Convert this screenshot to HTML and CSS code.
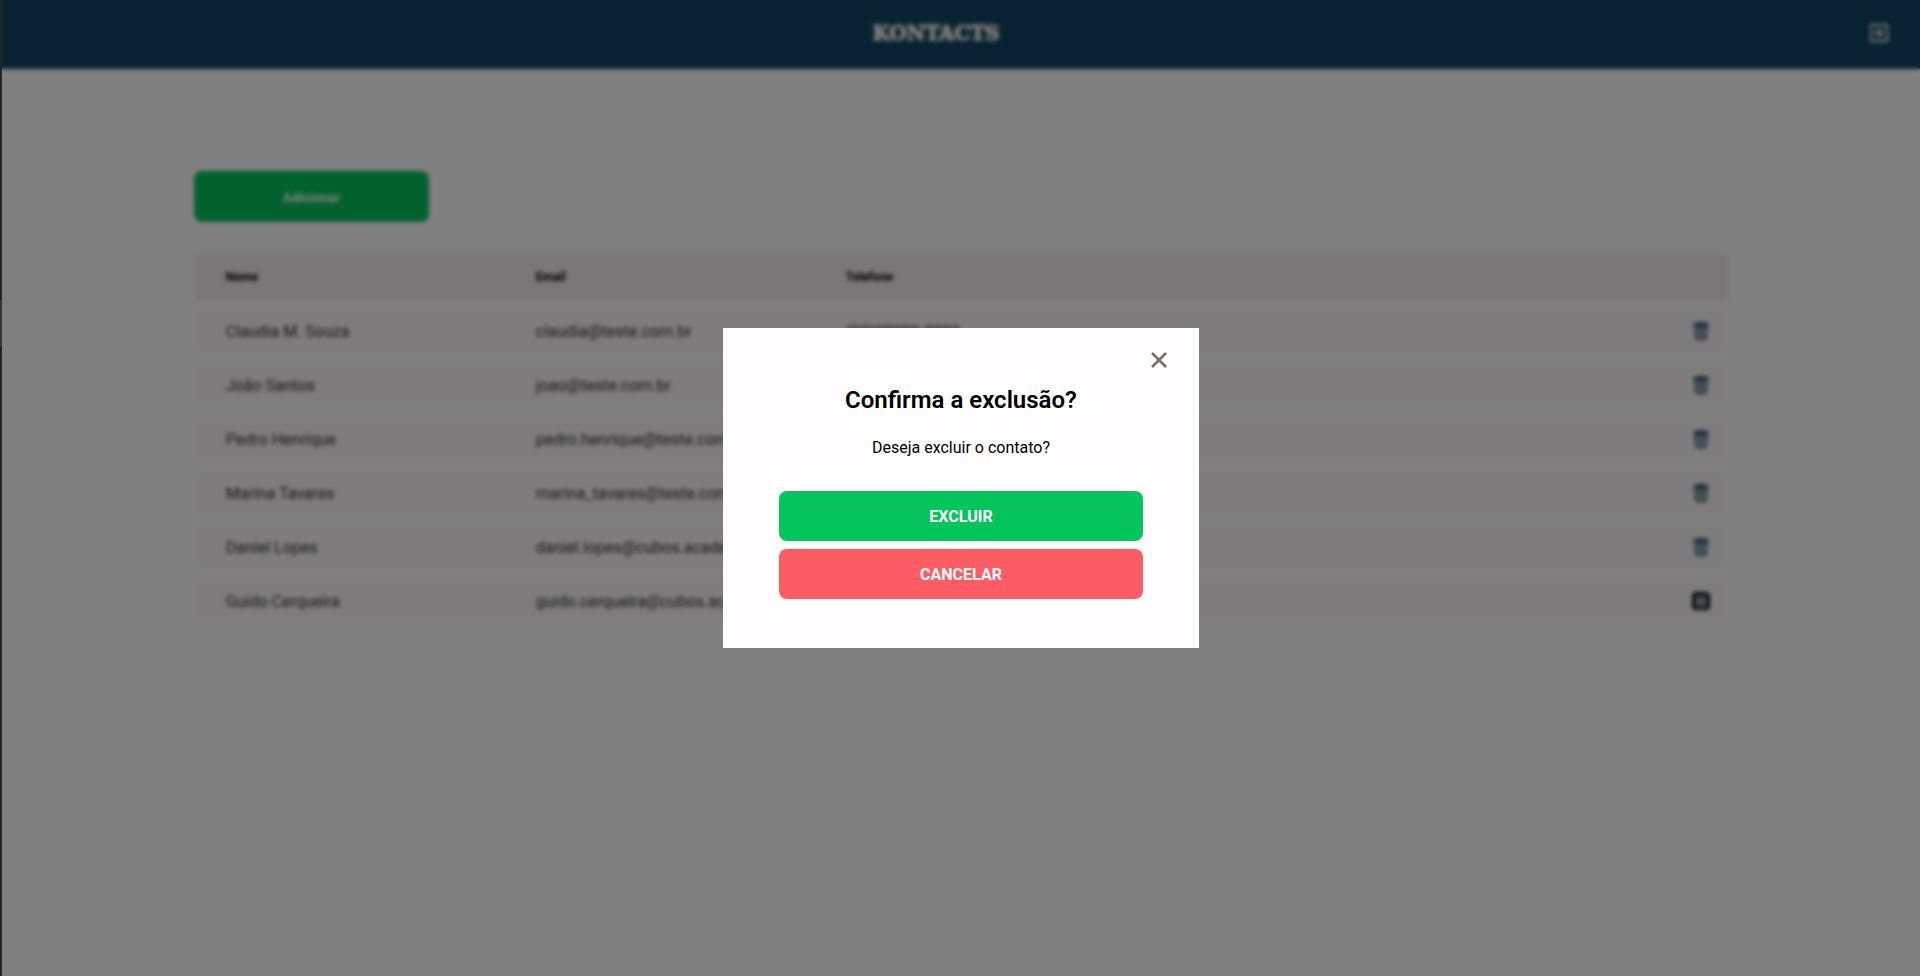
FILE: index.html
```html
<!DOCTYPE html>
<html lang="pt-BR">
<head>
<meta charset="utf-8">
<title>Kontacts</title>
<link rel="stylesheet" href="styles.css">
</head>
<body>
<svg class="sprite" aria-hidden="true">
  <symbol id="trash" viewBox="0 0 18 18">
    <path fill="currentColor" fill-rule="evenodd" d="M6.500 0h5l1 1H16.500v3H1.500V1h4zM2.500 5h13l-.8 11a2 2 0 0 1-2 2H5.300a2 2 0 0 1-2-2zM4.600 7l.7 9h7.400l.7-9zM6.600 9.200 7.800 8 9 9.200 10.200 8l1.200 1.200-1.300 2.100 1.300 2.100-1.200 1.200L9 13.400l-1.200 1.200-1.200-1.200 1.300-2.100z"/>
  </symbol>
</svg>
<div class="edge"></div>
<div class="app">
  <header class="topbar">
    <h1 class="logo">KONTACTS</h1>
    <button class="icon-button logout" aria-label="Sair">
      <svg width="24" height="24" viewBox="0 0 24 24" fill="currentColor"><path d="M10.090 15.590 11.500 17l5-5-5-5-1.410 1.410L12.670 11H3v2h9.670zM19 3H5a2 2 0 0 0-2 2v4h2V5h14v14H5v-4H3v4a2 2 0 0 0 2 2h14a2 2 0 0 0 2-2V5a2 2 0 0 0-2-2z"/></svg>
    </button>
  </header>
  <main class="content">
    <button class="button add">Adicionar</button>
    <table class="contacts">
      <thead>
        <tr><th class="col-name">Nome</th><th class="col">Email</th><th class="col">Telefone</th><th></th></tr>
      </thead>
      <tbody>
        <tr><td>Claudia M. Souza</td><td>claudia@teste.com.br</td><td>(99)99999-9999</td><td class="actions"><button class="icon-button trash" aria-label="Excluir Claudia M. Souza"><svg width="18" height="18"><use href="#trash"/></svg></button></td></tr>
        <tr><td>João Santos</td><td>joao@teste.com.br</td><td>(99)99999-9999</td><td class="actions"><button class="icon-button trash" aria-label="Excluir João Santos"><svg width="18" height="18"><use href="#trash"/></svg></button></td></tr>
        <tr><td>Pedro Henrique</td><td>pedro.henrique@teste.com.br</td><td>(99)99999-9999</td><td class="actions"><button class="icon-button trash" aria-label="Excluir Pedro Henrique"><svg width="18" height="18"><use href="#trash"/></svg></button></td></tr>
        <tr><td>Marina Tavares</td><td>marina_tavares@teste.com.br</td><td>(99)99999-9999</td><td class="actions"><button class="icon-button trash" aria-label="Excluir Marina Tavares"><svg width="18" height="18"><use href="#trash"/></svg></button></td></tr>
        <tr><td>Daniel Lopes</td><td>daniel.lopes@cubos.academy</td><td>(99)99999-9999</td><td class="actions"><button class="icon-button trash" aria-label="Excluir Daniel Lopes"><svg width="18" height="18"><use href="#trash"/></svg></button></td></tr>
        <tr><td>Guido Cerqueira</td><td>guido.cerqueira@cubos.academy</td><td>(99)99999-9999</td><td class="actions"><button class="icon-button trash selected" aria-label="Excluir Guido Cerqueira"><svg width="18" height="18"><use href="#trash"/></svg></button></td></tr>
      </tbody>
    </table>
  </main>
  <div class="overlay">
    <section class="modal" role="dialog" aria-modal="true" aria-labelledby="modal-title">
      <button class="icon-button close" aria-label="Fechar">
        <svg width="24" height="24" viewBox="0 0 24 24" fill="none" stroke="currentColor" stroke-width="2.700"><path d="m5 5 14 14M19 5 5 19"/></svg>
      </button>
      <h2 class="modal-title" id="modal-title">Confirma a exclusão?</h2>
      <p class="modal-text">Deseja excluir o contato?</p>
      <div class="modal-actions">
        <button class="button confirm">EXCLUIR</button>
        <button class="button cancel">CANCELAR</button>
      </div>
    </section>
  </div>
</div>
</body>
</html>
```
FILE: styles.css
```css
* {
  box-sizing: border-box;
}

body {
  margin: 0;
  min-height: 100vh;
  display: flex;
  font-family: Roboto, "Open Sans", sans-serif;
  font-size: 16px;
  background: #fff;
}

h1, h2, p {
  margin: 0;
}

.sprite {
  position: absolute;
  width: 0;
  height: 0;
}

.edge {
  width: 2px;
  background: linear-gradient(#242424 300px, #363636 300px, #363636 347px, #242424 347px);
}

.app {
  position: relative;
  flex: 1;
}

.topbar {
  display: flex;
  align-items: center;
  height: 69px;
  padding: 0 29px 3px 3px;
  background: #134563;
  color: #fff;
}

.logo {
  flex: 1;
  text-align: center;
  font-family: "DejaVu Serif", serif;
  font-size: 20px;
  line-height: 24px;
  font-weight: 700;
  -webkit-text-stroke: 1px #fff;
}

.icon-button {
  display: block;
  padding: 0;
  border: 0;
  background: none;
  color: inherit;
}

.icon-button svg {
  display: block;
}

.content {
  width: 80%;
  margin: 0 auto;
  padding-top: 102px;
}

.button {
  display: block;
  height: 50px;
  padding: 0;
  border: 0;
  border-radius: 8px;
  color: #fff;
  font-family: inherit;
  font-weight: 700;
}

.add {
  width: 235px;
  height: 51px;
  padding-top: 2px;
  background: #04c45c;
}

.contacts {
  width: 100%;
  margin-top: 24px;
  border-spacing: 0 8px;
  table-layout: fixed;
}

.contacts th,
.contacts td {
  height: 46px;
  padding: 0;
  text-align: left;
  white-space: nowrap;
}

.contacts th {
  background: #f4eef0;
  font-size: 12px;
  font-weight: 700;
}

.contacts td {
  background: #fef9fb;
  color: #333;
}

.contacts th:first-child,
.contacts td:first-child {
  padding-left: 32px;
}

.col-name {
  width: 342px;
}

.col {
  width: 310px;
}

.contacts .actions {
  padding-right: 18px;
}

.trash {
  margin-left: auto;
  color: #134563;
}

.selected {
  border-radius: 4px;
  outline: 3px solid #101010;
  outline-offset: -3px;
}

.overlay {
  position: absolute;
  inset: 0;
  display: flex;
  align-items: center;
  justify-content: center;
  background: rgba(0, 0, 0, 0.5);
  backdrop-filter: blur(0.12rem);
}

.modal {
  display: flex;
  flex-direction: column;
  width: 476px;
  padding: 20px 56px 49px;
  background: #fffdfd;
  text-align: center;
}

.close {
  align-self: flex-end;
  margin-right: -28px;
  color: #7a6e6e;
}

.modal-title {
  margin-top: 14px;
  font-size: 24px;
  line-height: 28px;
  font-weight: 600;
}

.modal-text {
  margin-top: 24px;
  line-height: 20px;
}

.modal-actions {
  display: grid;
  gap: 8px;
  margin-top: 33px;
}

.modal-actions .button {
  font-size: 16px;
}

.confirm {
  background: #04c45c;
}

.cancel {
  background: #fd5c65;
}
```
